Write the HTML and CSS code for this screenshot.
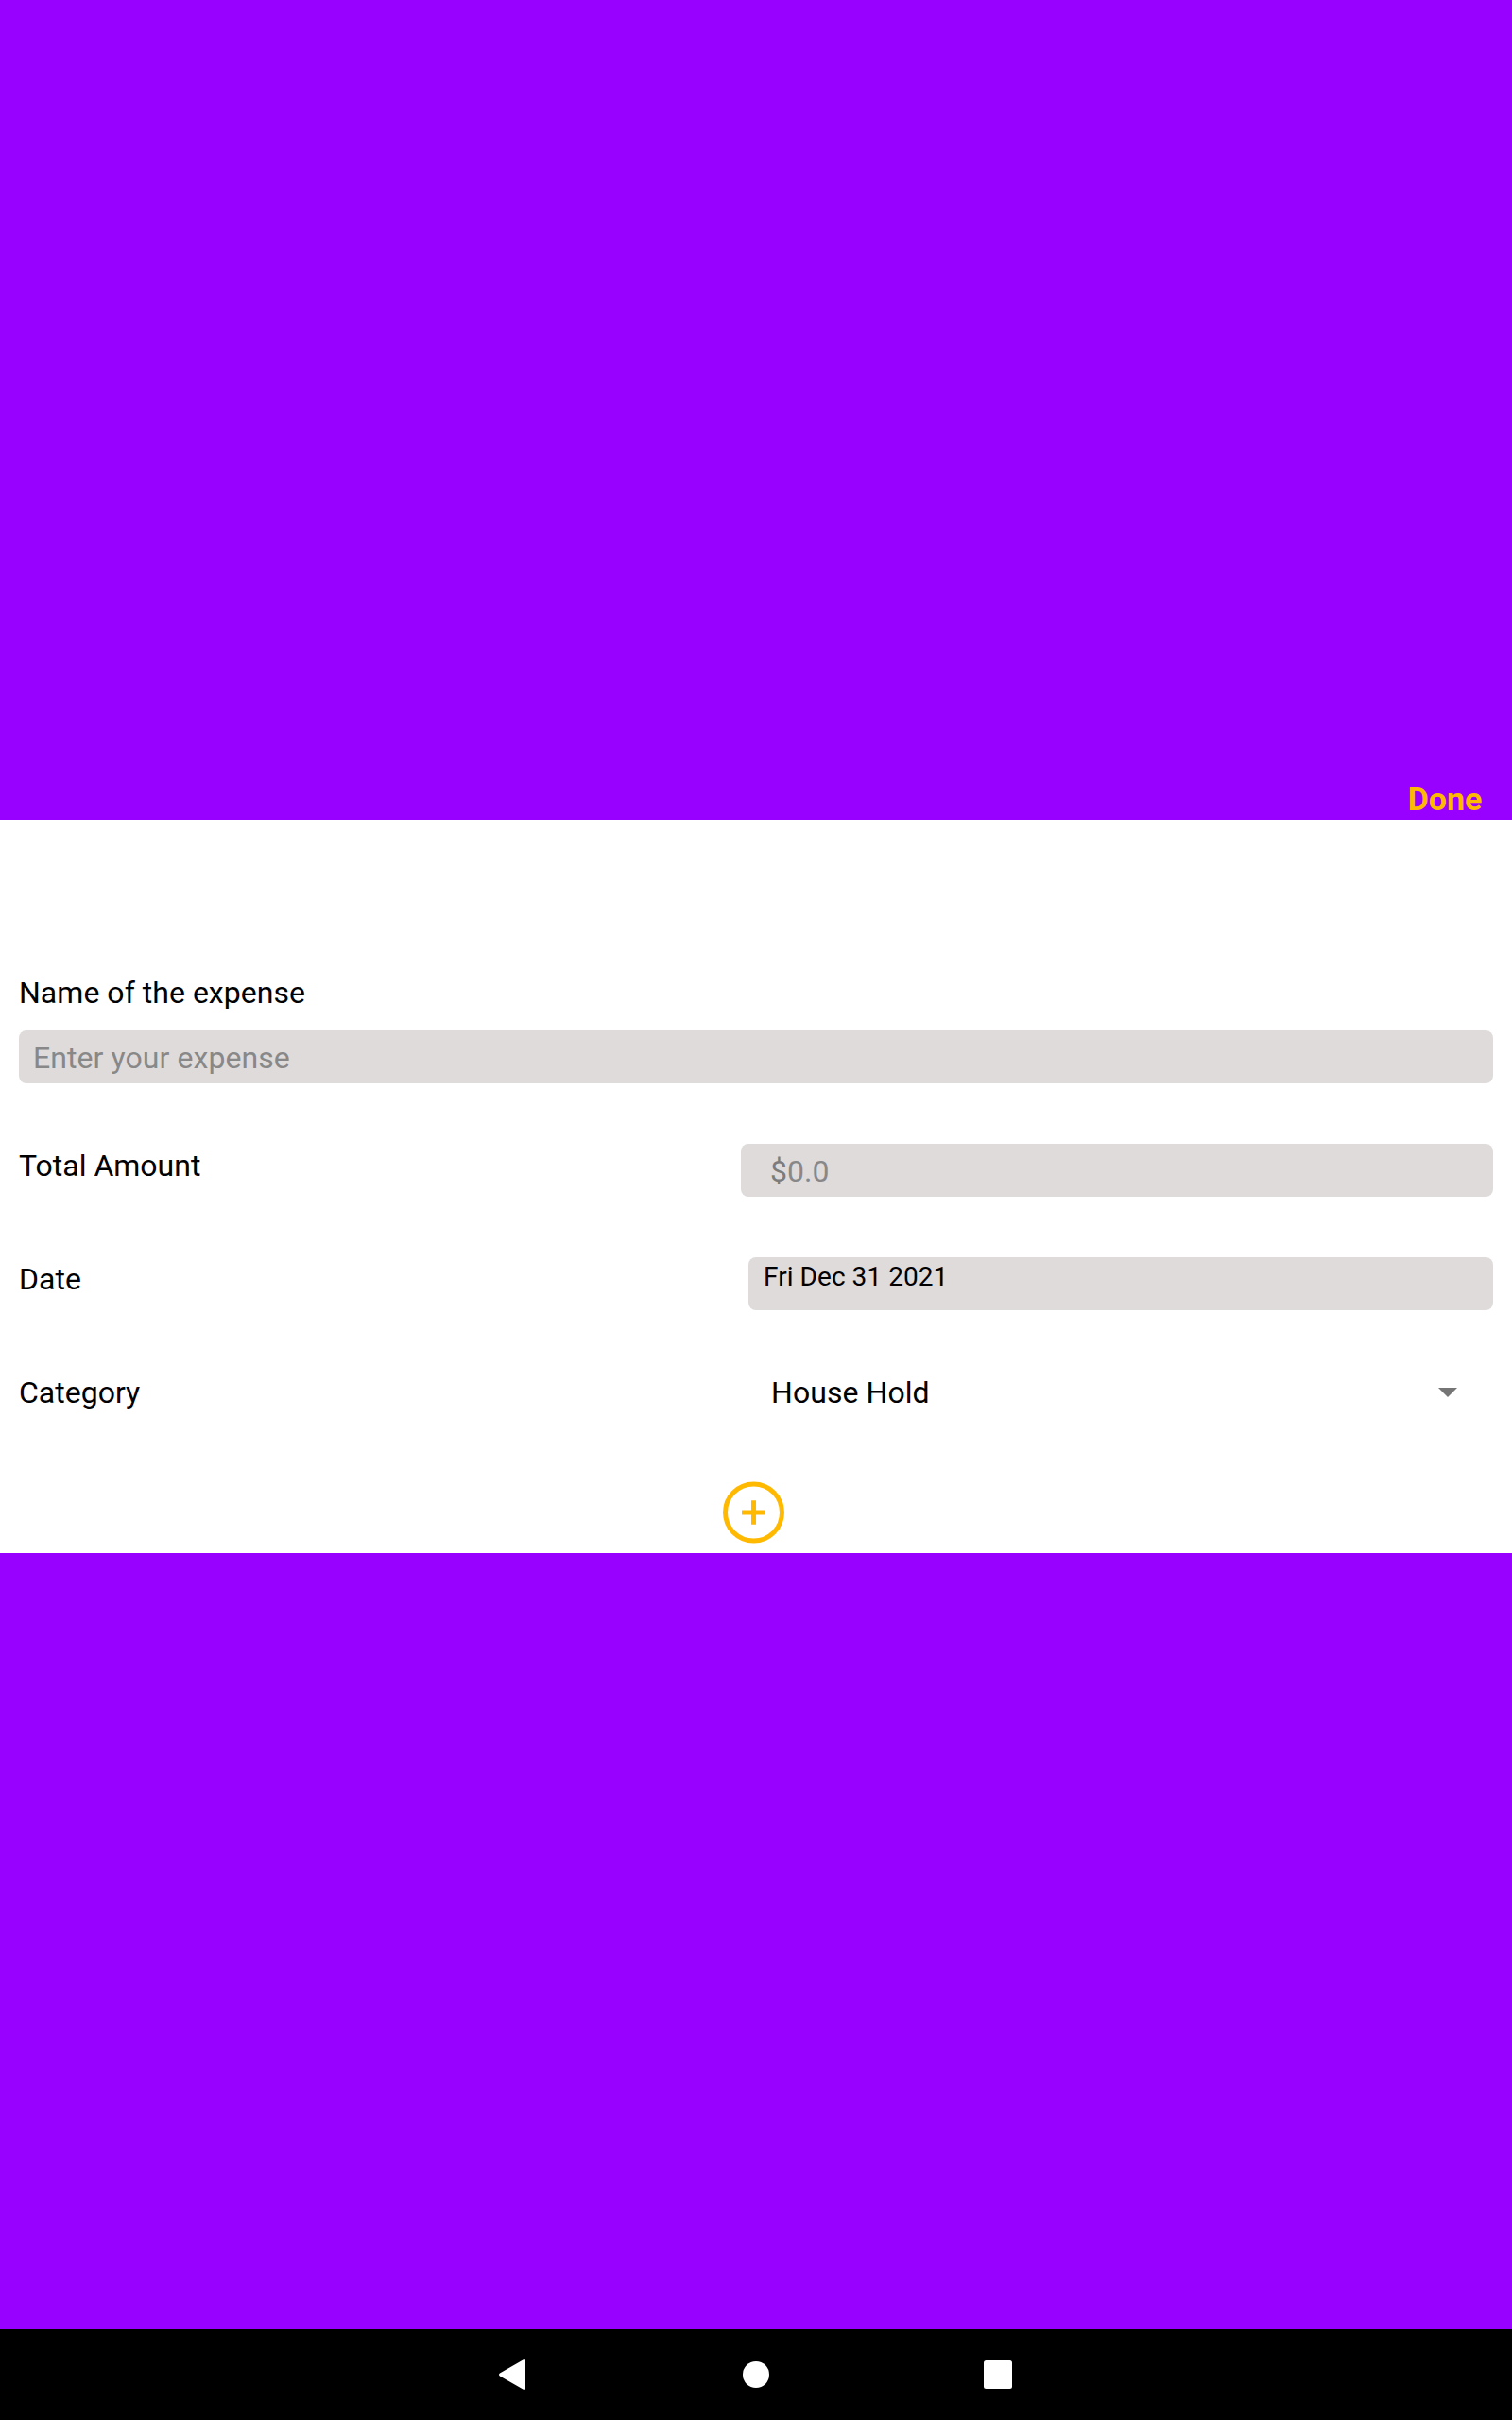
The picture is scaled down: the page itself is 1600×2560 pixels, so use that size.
FILE: index.html
```html
<!DOCTYPE html>
<html lang="en">
<head>
<meta charset="utf-8">
<title>Add expense</title>
<link rel="stylesheet" href="styles.css">
</head>
<body>
<div class="screen">
  <header class="header"><span class="done">Done</span></header>
  <main class="form">
    <div class="label name-label">Name of the expense</div>
    <div class="field name-field">Enter your expense</div>
    <div class="row">
      <div class="label">Total Amount</div>
      <div class="field amount"><span class="dollar">$</span><span>0.0</span></div>
    </div>
    <div class="row">
      <div class="label">Date</div>
      <div class="field date">Fri Dec 31 2021</div>
    </div>
    <div class="row">
      <div class="label">Category</div>
      <div class="picker"><span>House Hold</span>
        <svg class="caret" width="20" height="10" viewBox="0 0 20 10"><path d="M0 0h20L10 10z"/></svg>
      </div>
    </div>
    <svg class="add" width="65" height="66" viewBox="0 0 65 66"><circle cx="32.5" cy="33" r="30"/><path d="M20 33h25M32.5 20.2v25.6"/></svg>
  </main>
  <div class="spacer"></div>
  <nav class="nav">
    <svg width="28" height="32" viewBox="0 0 28 32"><path d="M.9 14.6 25.4.4Q28-.9 28 1.4v29.2q0 2.3-2.6 1L.9 17.4q-1.8-1.4 0-2.8z"/></svg>
    <svg width="28" height="28" viewBox="0 0 28 28"><circle cx="14" cy="14" r="14"/></svg>
    <svg width="30" height="30" viewBox="0 0 30 30"><rect width="30" height="30" rx="2.5"/></svg>
  </nav>
</div>
</body>
</html>
```
FILE: styles.css
```css
* { box-sizing: border-box; }
body {
  margin: 0;
  font-family: Roboto, sans-serif;
  font-size: 32px;
  line-height: 38px;
  color: #000;
}
.screen {
  display: flex;
  flex-direction: column;
  width: 1600px;
  height: 2560px;
  background: #9800ff;
}
.header {
  display: flex;
  justify-content: flex-end;
  align-items: flex-end;
  height: 867px;
  padding: 0 31.6px 1px 0;
  color: #ffb900;
}
.done {
  font-size: 34px;
  font-weight: 700;
  line-height: 42px;
}
.form {
  display: flex;
  flex-direction: column;
  height: 776px;
  padding: 164px 20px 0;
  background: #fff;
}
.name-label {
  margin-bottom: 21px;
  letter-spacing: 0.03px;
}
.field {
  height: 56px;
  border-radius: 8px;
  background: #dfdbdb;
  color: #888;
  line-height: 58px;
}
.name-field {
  padding-left: 15px;
  letter-spacing: 0.07px;
}
.row {
  display: flex;
  justify-content: space-between;
  height: 56px;
  margin-top: 64px;
}
.row .label { padding-top: 4px; }
.amount {
  width: 796px;
  padding-left: 31px;
}
.dollar { color: #7c7c7c; }
.date {
  width: 788px;
  padding: 9px 0 0 16px;
  color: #000;
  font-size: 28px;
  line-height: 24px;
  letter-spacing: 0.05px;
}
.picker {
  display: flex;
  justify-content: space-between;
  width: 764px;
  padding: 4px 38px 0 0;
  letter-spacing: 0.06px;
}
.caret {
  margin-top: 14px;
  fill: #757575;
}
.add {
  align-self: flex-start;
  margin: 61px 0 0 745px;
  fill: none;
  stroke: #ffb900;
  stroke-width: 5;
}
.spacer { flex: 1; }
.nav {
  display: flex;
  align-items: center;
  gap: 230px;
  height: 96px;
  padding-left: 528px;
  background: #000;
  fill: #fff;
}
.nav svg:last-child { margin-left: -3px; }
```
